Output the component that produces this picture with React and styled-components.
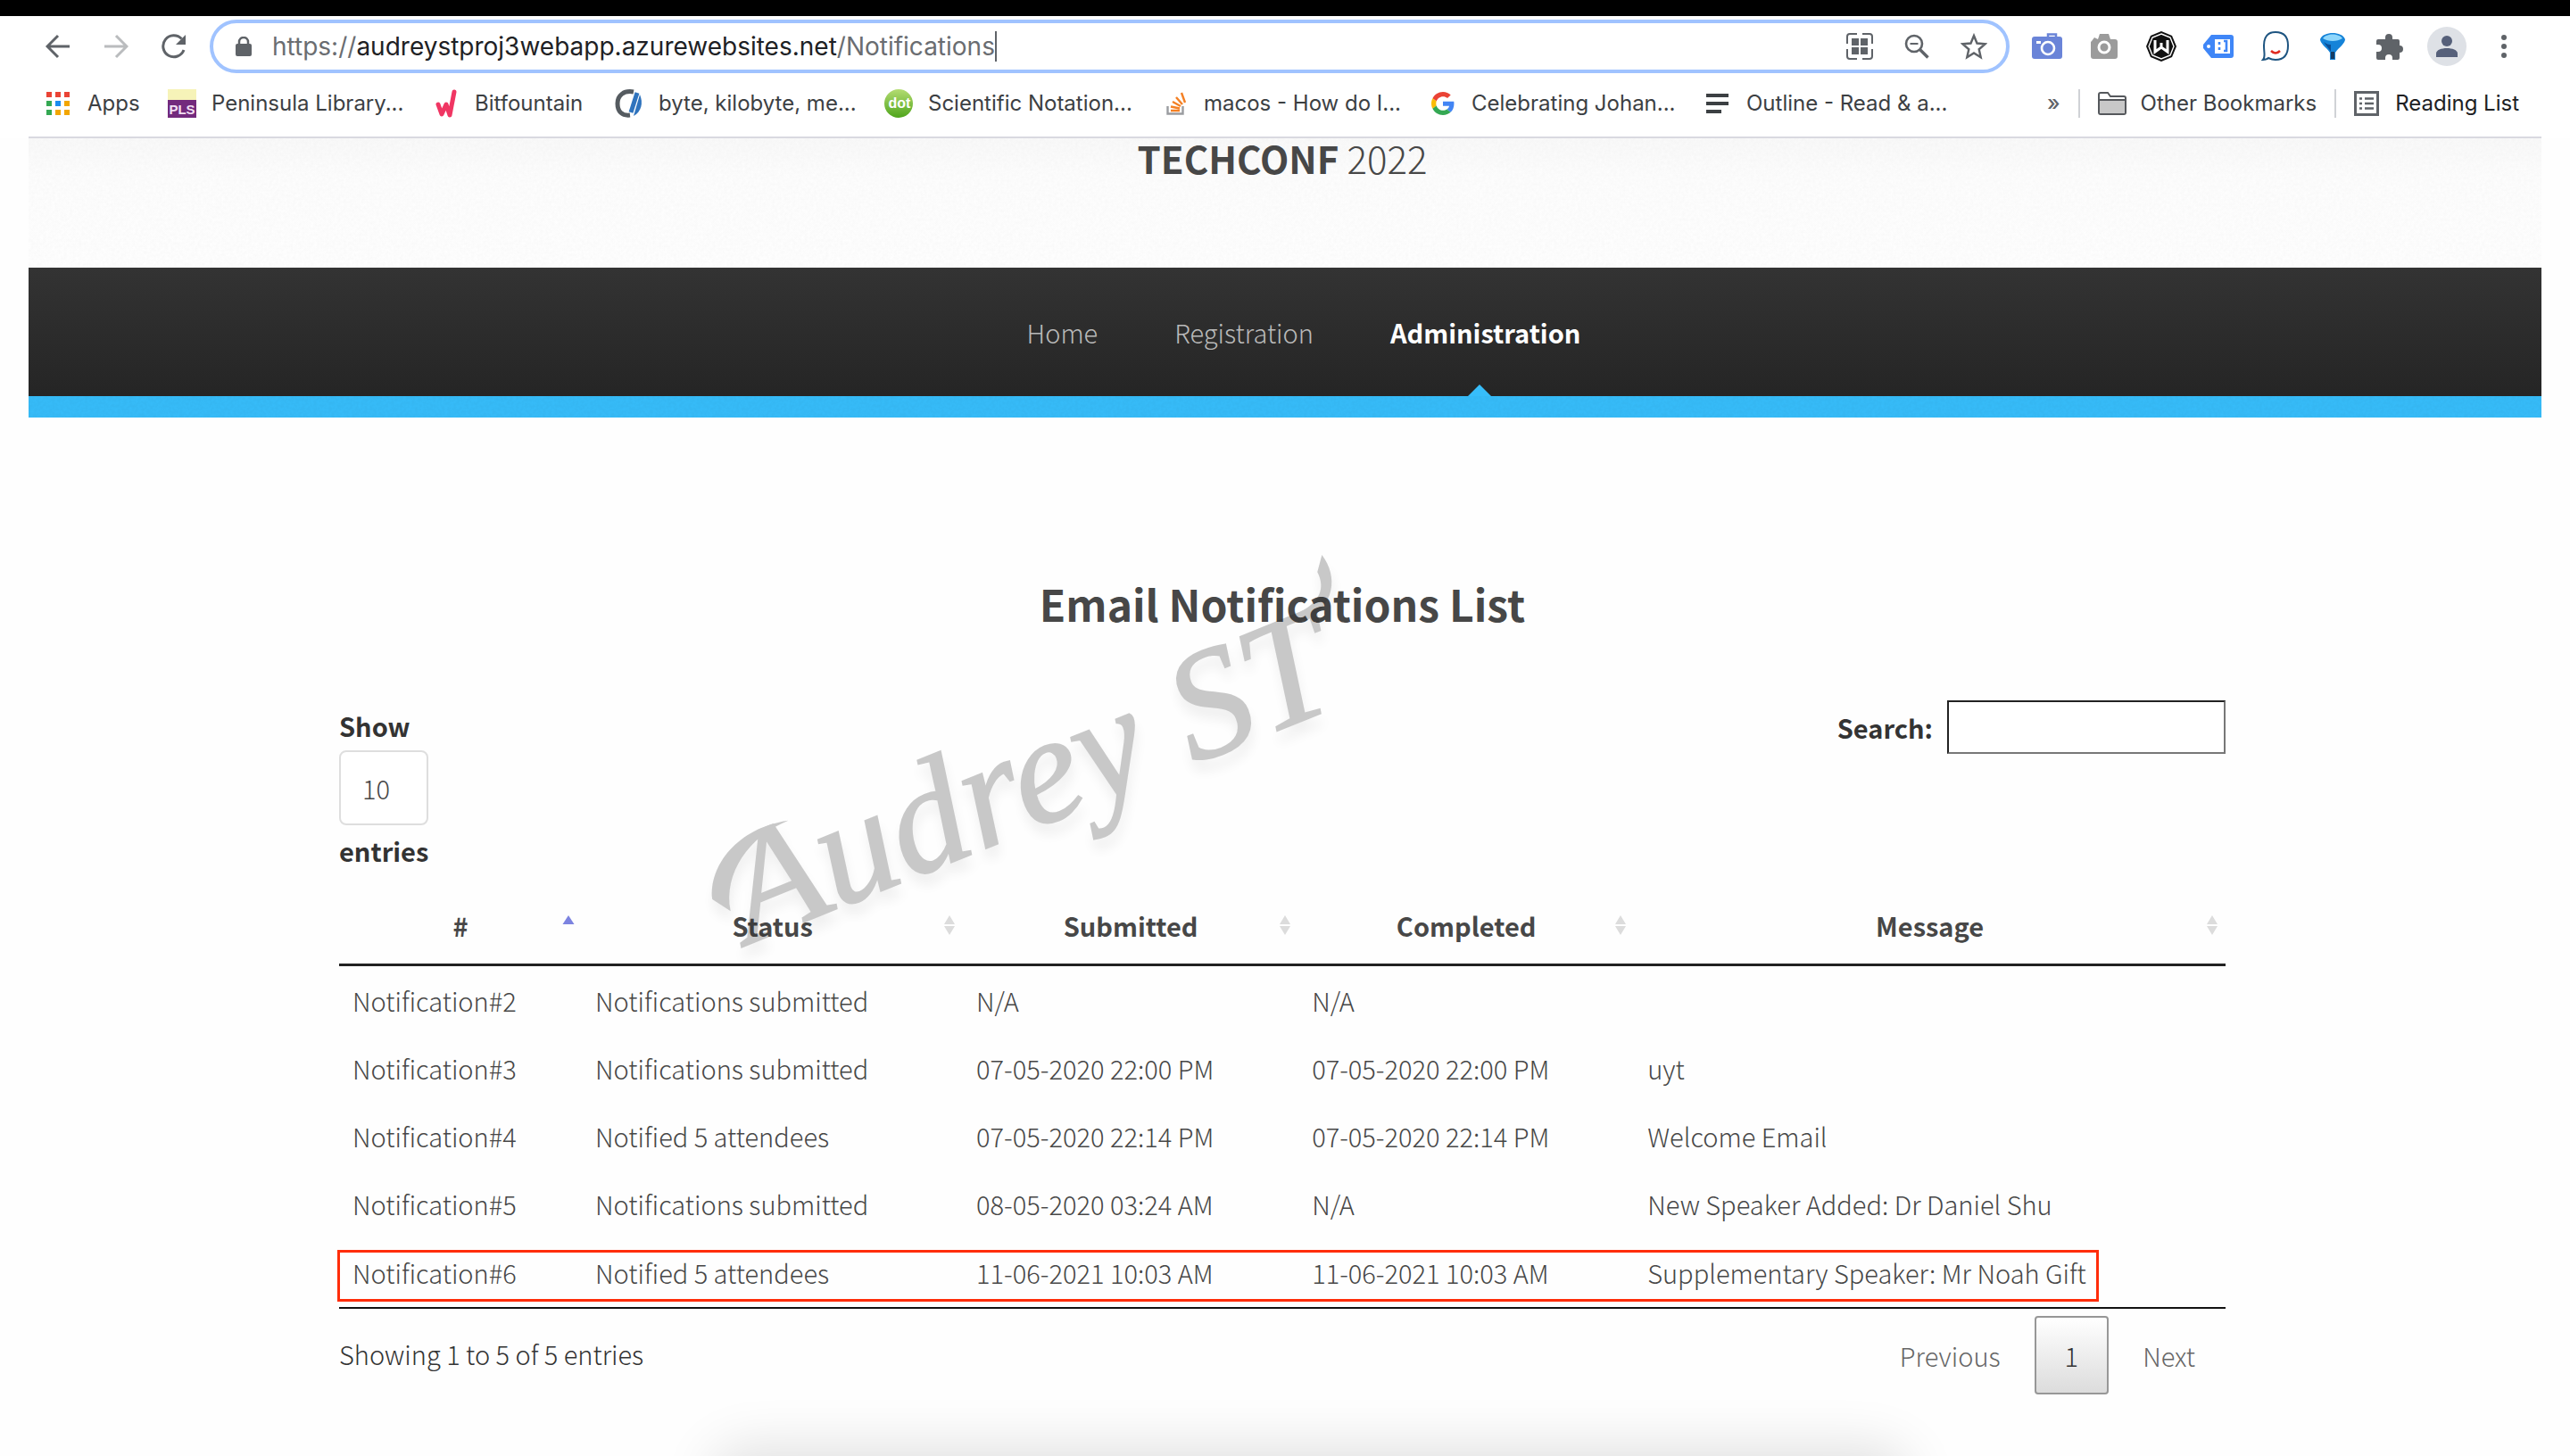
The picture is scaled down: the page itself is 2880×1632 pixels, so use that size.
import React from "react";
import styled, { createGlobalStyle, css } from "styled-components";

const GlobalStyle = createGlobalStyle`
  *, *::before, *::after { box-sizing: border-box; }
  html, body { margin: 0; background: #fff; overflow: hidden; }
  a { color: inherit; text-decoration: none; }
`;

const siteFont = `"Source Sans Pro", "Noto Sans CJK SC", "Noto Sans", sans-serif`;
const chromeFont = `Inter, "Liberation Sans", sans-serif`;

const Screen = styled.div`
  position: relative;
  min-height: 100vh;
  overflow: hidden;
  background: #fefefe;
`;

const TopEdge = styled.div`
  height: 18px;
  background: #000;
`;

/* ---------- Browser chrome ---------- */

const Chrome = styled.header`
  font-family: ${chromeFont};
  color: #3c4043;
  background: #fff;
  padding: 4px 32px 0;
`;

const Toolbar = styled.div`
  display: flex;
  align-items: center;
  height: 60px;
  padding: 0 10px 0 16px;
`;

const IconButton = styled.button`
  display: grid;
  place-items: center;
  flex: none;
  width: ${(p) => p.$w || 64}px;
  height: 52px;
  padding: 0;
  border: 0;
  background: none;
  color: #5f6368;
  svg { display: block; }
`;

const AddressBar = styled.div`
  flex: 1;
  display: flex;
  align-items: center;
  height: 60px;
  margin-left: 22px;
  margin-right: 10px;
  padding: 0 4px 0 16px;
  border: 4px solid #a0c3ff;
  border-radius: 30px;
`;

const Url = styled.div`
  flex: 1;
  display: flex;
  align-items: center;
  margin-left: 14px;
  font-size: 28px;
  line-height: 36px;
  color: #6a6d71;
  outline: none;
  white-space: nowrap;
  b { font-weight: 400; color: #202124; }
`;

const Caret = styled.i`
  width: 2px;
  height: 34px;
  background: #5f6368;
`;

const Extensions = styled.div`
  display: flex;
`;

const Avatar = styled.span`
  display: grid;
  place-items: center;
  width: 44px;
  height: 44px;
  border-radius: 50%;
  background: #dee1e6;
`;

const Bookmarks = styled.nav`
  display: flex;
  align-items: center;
  height: 73px;
  padding: 0 25px 3px 20px;
  border-bottom: 2px solid #d9d9e0;
`;

const Bookmark = styled.a`
  flex: none;
  display: flex;
  align-items: center;
  width: ${(p) => (p.$w ? `${p.$w}px` : "auto")};
  gap: ${(p) => p.$gap || 18}px;
  font-size: 24px;
  line-height: 32px;
  white-space: nowrap;
  color: ${(p) => (p.$dark ? "#202124" : "#3c4043")};
  svg { flex: none; display: block; }
`;

const Spacer = styled.div`
  flex: 1;
`;

const Divider = styled.i`
  width: 2px;
  height: 32px;
  margin: 0 20px;
  background: #d0d2d6;
`;

const More = styled.button`
  padding: 0;
  border: 0;
  background: none;
  font: 500 24px/32px ${chromeFont};
  color: #5f6368;
`;

/* ---------- Conference site ---------- */

const Site = styled.div`
  margin: 0 32px;
  font-family: ${siteFont};
  font-weight: 300;
  font-size: 29px;
  line-height: 48px;
  color: #474747;
`;

const Banner = styled.div`
  position: relative;
  padding: 0 6px 101px 0;
  background: linear-gradient(#fafafa, #fefefe 30%, #fff);
  text-align: center;
`;

const Grain = styled.svg`
  position: absolute;
  inset: 0;
  width: 100%;
  height: 100%;
  opacity: ${(p) => p.$strength};
`;

const Brand = styled.h1`
  position: relative;
  margin: 0;
  font-size: 42px;
  line-height: 44px;
  font-weight: 300;
  color: #474747;
  b { font-weight: 700; }
`;

const SiteNav = styled.nav`
  position: relative;
  display: flex;
  justify-content: center;
  gap: 86px;
  padding: 48px 0 48px 42px;
  background: linear-gradient(#333, #252525);
`;

const NavLink = styled.a`
  position: relative;
  color: #b9b9b9;
  ${(p) =>
    p.$active &&
    css`
      font-weight: 700;
      color: #fff;
      &::after {
        content: "";
        position: absolute;
        left: 50%;
        bottom: -48px;
        margin-left: -20px;
        border: 13px solid transparent;
        border-top: 0;
        border-bottom: 13px solid #37bdfa;
      }
    `}
`;

const Stripe = styled.div`
  position: relative;
  height: 24px;
  background: #37bdfa;
`;

const Content = styled.main`
  width: 75.23%;
  margin: 0 auto;
  padding-top: 178px;
`;

const ContentShift = styled.div`
  padding-right: 6px;
`;

const Title = styled.h2`
  margin: 0 0 79px;
  font-size: 48px;
  line-height: 60px;
  font-weight: 700;
  text-align: center;
`;

const Controls = styled.div`
  display: flex;
  justify-content: space-between;
  align-items: flex-start;
`;

const LengthLabel = styled.label`
  display: flex;
  flex-direction: column;
  align-items: flex-start;
  gap: 4px;
  padding-top: 4px;
  font-weight: 700;
  color: #333;
`;

const LengthSelect = styled.select`
  appearance: none;
  width: 100px;
  height: 84px;
  padding: 0 24px;
  border: 2px solid #dedede;
  border-radius: 8px;
  background: #fff;
  font: 300 29px/48px ${siteFont};
  color: #474747;
`;

const SearchLabel = styled.label`
  display: flex;
  align-items: center;
  gap: 16px;
  font-weight: 700;
  color: #333;
`;

const SearchInput = styled.input`
  width: 312px;
  height: 60px;
  padding: 2px;
  border: 2px solid;
  border-color: #222 #777 #777 #222;
  border-radius: 0;
  background: #fff;
  font: 300 29px/48px ${siteFont};
`;

const TableWrap = styled.div`
  position: relative;
  margin-top: 17px;
`;

const Table = styled.table`
  width: 100%;
  table-layout: fixed;
  border-collapse: separate;
  border-spacing: 0;
  border-bottom: 2px solid #111;
`;

const Th = styled.th`
  position: relative;
  height: 89px;
  padding: 0 36px;
  border-bottom: 3px solid #222;
  font-weight: 700;
  text-align: center;
  svg {
    position: absolute;
    right: 8px;
    top: 31px;
  }
`;

const Td = styled.td`
  height: 76px;
  padding: 0 15px;
  white-space: nowrap;
  tr:last-child > & { height: 78px; }
`;

const Highlight = styled.div`
  position: absolute;
  left: -2px;
  bottom: 8px;
  width: 93.4%;
  height: 58px;
  border: 3px solid #ff2d0a;
  pointer-events: none;
`;

const Footer = styled.div`
  display: flex;
  justify-content: space-between;
  align-items: flex-start;
  margin-top: 8px;
`;

const Info = styled.p`
  margin: 0;
  line-height: 84px;
  color: #333;
`;

const Pager = styled.div`
  display: flex;
  gap: 4px;
`;

const PageButton = styled.button`
  height: 88px;
  padding: 0 32px;
  border: 2px solid transparent;
  border-radius: 4px;
  background: none;
  font: 300 29px/48px ${siteFont};
  color: #666;
  ${(p) =>
    p.$current &&
    css`
      border-color: #979797;
      background: linear-gradient(#fff, #dcdcdc);
      color: #333;
    `}
`;

const Watermark = styled.svg`
  position: absolute;
  left: 780px;
  top: 600px;
  pointer-events: none;
`;

const DockShadow = styled.div`
  position: absolute;
  left: 28%;
  right: 26%;
  top: 100%;
  height: 60px;
  border-radius: 30px;
  box-shadow: 0 0 60px 10px rgba(0, 0, 0, 0.12);
`;

/* ---------- Icons ---------- */

const ArrowIcon = ({ forward }) => (
  <svg width="28" height="28" viewBox="0 0 28 28" fill="none" stroke={forward ? "#babcbe" : "#5f6368"} strokeWidth="3">
    <path d={forward ? "M1 14h24M14 2l12 12-12 12" : "M27 14H3M14 2 2 14l12 12"} />
  </svg>
);

const ReloadIcon = () => (
  <svg width="28" height="28" viewBox="0 0 28 28" fill="none">
    <path d="M25 18A12 12 0 1 1 22.500 5.500" stroke="#5f6368" strokeWidth="3" />
    <path d="M27 1v11H16z" fill="#5f6368" />
  </svg>
);

const LockIcon = () => (
  <svg width="18" height="22" viewBox="0 0 18 22">
    <rect y="8" width="18" height="14" rx="2" fill="#5f6368" />
    <path d="M4 9V6a5 5 0 0 1 10 0v3" fill="none" stroke="#5f6368" strokeWidth="2.500" />
  </svg>
);

const QrIcon = () => (
  <svg width="30" height="30" viewBox="0 0 30 30" fill="none">
    <path d="M1 12V4a3 3 0 0 1 3-3h8M18 1h8a3 3 0 0 1 3 3v8M29 18v8a3 3 0 0 1-3 3h-8M12 29H4a3 3 0 0 1-3-3v-8" stroke="#5f6368" strokeWidth="2" />
    <path d="M6 6h8v8H6zM16 6h8v8h-8zM6 16h8v8H6zM16 16h8v8h-8z" fill="#5f6368" />
  </svg>
);

const ZoomOutIcon = () => (
  <svg width="28" height="28" viewBox="0 0 28 28" fill="none" stroke="#5f6368">
    <circle cx="11" cy="11" r="9" strokeWidth="2.600" />
    <path d="M6.500 11h9" strokeWidth="2" />
    <path d="m17.500 17.500 9 9" strokeWidth="3.400" />
  </svg>
);

const StarIcon = () => (
  <svg width="30" height="30" viewBox="0 0 30 30">
    <path d="m15 3 3.500 8.500 9 .8-6.800 6 2 9L15 22.500 7.300 27.300l2-9-6.800-6 9-.8z" fill="none" stroke="#5f6368" strokeWidth="2.400" />
  </svg>
);

const CameraBlueIcon = () => (
  <svg width="34" height="30" viewBox="0 0 34 30">
    <path d="M18 5V1.500h9V5" fill="none" stroke="#6a84d8" strokeWidth="2.500" />
    <rect y="4" width="34" height="25" rx="3" fill="#6a84d8" />
    <rect x="5" y="9" width="5" height="3" fill="#fff" />
    <circle cx="18" cy="17" r="7" fill="none" stroke="#fff" strokeWidth="2.600" />
  </svg>
);

const CameraGreyIcon = () => (
  <svg width="30" height="28" viewBox="0 0 30 28">
    <path d="M1 8 4 4l4 2 2-6h10l2 6h5a3 3 0 0 1 3 3v16a3 3 0 0 1-3 3H3a3 3 0 0 1-3-3V9z" fill="#9b9b9b" />
    <circle cx="15" cy="15" r="6" fill="none" stroke="#fff" strokeWidth="3" />
  </svg>
);

const ShieldWIcon = () => (
  <svg width="34" height="34" viewBox="0 0 34 34">
    <path d="M17 0 29 5l5 12-5 12-12 5-12-5L0 17 5 5z" fill="#111" />
    <path d="m17 3 10 4 4 10-4 10-10 4-10-4-4-10L7 7z" fill="none" stroke="#fff" strokeWidth="1.400" />
    <path d="M10 10v13l7-5 7 5V10M17 13v6" fill="none" stroke="#fff" strokeWidth="3" />
  </svg>
);

const TagIcon = () => (
  <svg width="34" height="26" viewBox="0 0 34 26">
    <path d="M9 0h22a3 3 0 0 1 3 3v20a3 3 0 0 1-3 3H9l-9-11v-4z" fill="#3f86f7" />
    <circle cx="6" cy="13" r="2" fill="#fff" />
    <path d="M13 5h17v16H13z" fill="#fff" />
    <path d="M18 8v3M18 14v3M23 7h3v11h-3" fill="none" stroke="#3f86f7" strokeWidth="2.600" />
  </svg>
);

const ChatIcon = () => (
  <svg width="32" height="34" viewBox="0 0 32 34" fill="none">
    <path d="M2 32c3-3 1-7 1-16C3 5 8 1 16 1s14 4 14 15-5 16-14 16c-4 0-6-1-8-2-2 2-4 2-6 2z" stroke="#1d5480" strokeWidth="2" />
    <path d="M11 22q5 5 10 0" stroke="#e02b20" strokeWidth="2.500" />
  </svg>
);

const BalloonIcon = () => (
  <svg width="30" height="30" viewBox="0 0 30 30">
    <path d="M1 7c2-5 8-7 14-7s12 2 14 7c0 5-7 9-11 15v8h-6v-8C8 16 1 12 1 7z" fill="#1583d8" />
    <path d="M4 6c4-6 18-6 22 0-6 4-16 4-22 0z" fill="#8ed6fb" />
    <path d="M5 10c4 3 6 3 8 3v8C11 17 7 14 5 10z" fill="#0b4f96" />
    <path d="M13 21h4v8h-4z" fill="#163c63" />
  </svg>
);

const PuzzleIcon = () => (
  <svg width="30" height="30" viewBox="0 0 30 30">
    <path d="M2 7h8V5a4 4 0 0 1 8 0v2h6a2 2 0 0 1 2 2v5a4 4 0 0 1 0 8v6a2 2 0 0 1-2 2h-6v-2a4 4 0 0 0-8 0v2H2a2 2 0 0 1-2-2v-7h2a4 4 0 0 0 0-8H0V9a2 2 0 0 1 2-2z" fill="#5f6368" />
  </svg>
);

const PersonIcon = () => (
  <svg width="26" height="26" viewBox="0 0 26 26" fill="#56607a">
    <circle cx="13" cy="7" r="6" />
    <path d="M1 25v-4c0-4 6-6 12-6s12 2 12 6v4z" />
  </svg>
);

const DotsIcon = () => (
  <svg width="8" height="28" viewBox="0 0 8 28" fill="#5f6368">
    <circle cx="4" cy="4" r="3" />
    <circle cx="4" cy="14" r="3" />
    <circle cx="4" cy="24" r="3" />
  </svg>
);

const appColors = ["#ea4335", "#ea4335", "#ea4335", "#34a853", "#1a8cf0", "#f2a600", "#34a853", "#f2a600", "#f2a600"];
const AppsIcon = () => (
  <svg width="26" height="26" viewBox="0 0 26 26">
    {appColors.map((c, i) => (
      <rect key={i} x={(i % 3) * 10} y={Math.floor(i / 3) * 10} width="6" height="6" fill={c} />
    ))}
  </svg>
);

const PlsIcon = () => (
  <svg width="32" height="32" viewBox="0 0 32 32">
    <rect width="32" height="12" fill="#f6f3b8" />
    <rect y="12" width="32" height="20" fill="#732a7d" />
    <text x="16" y="28" fill="#f1dff3" fontFamily="Liberation Sans, sans-serif" fontWeight="700" fontSize="15" textAnchor="middle">PLS</text>
  </svg>
);

const BitIcon = () => (
  <svg width="24" height="32" viewBox="0 0 24 32" fill="none" stroke="#f03663" strokeWidth="5" strokeLinecap="round" strokeLinejoin="round">
    <path d="m3 17 4 11 5-11 4 12 5-26" />
  </svg>
);

const ByteIcon = () => (
  <svg width="32" height="32" viewBox="0 0 32 32" fill="none">
    <path d="M21 3C10 1 3 7 3 16s5 14 14 13" stroke="#555b60" strokeWidth="5" />
    <path d="m25 4-7 22" stroke="#2f73bd" strokeWidth="5" />
    <path d="M28 6c4 9 2 19-7 24z" fill="#2f73bd" />
  </svg>
);

const DotIcon = () => (
  <svg width="32" height="32" viewBox="0 0 32 32">
    <defs>
      <linearGradient id="dotFill" x1="0" y1="0" x2="0" y2="1">
        <stop offset="0" stopColor="#b4dc72" />
        <stop offset="1" stopColor="#4fa51c" />
      </linearGradient>
    </defs>
    <circle cx="16" cy="16" r="16" fill="url(#dotFill)" />
    <text x="17" y="21" fill="#fff" fontFamily="Liberation Sans, sans-serif" fontWeight="700" fontSize="16" textAnchor="middle">dot</text>
  </svg>
);

const StackIcon = () => (
  <svg width="24" height="26" viewBox="0 0 24 26" fill="none">
    <path d="M1.500 16v8.500h17V16" stroke="#9a9ca0" strokeWidth="2.400" />
    <path d="M5 21h10M5 16.500l10 2M7 11l9 5M11 6l7 8M17 1l4 11" stroke="#f48024" strokeWidth="2.400" />
  </svg>
);

const GoogleIcon = () => (
  <svg width="26" height="26" viewBox="0 0 48 48">
    <path fill="#EA4335" d="M24 9.500c3.540 0 6.710 1.220 9.210 3.600l6.850-6.850C35.900 2.380 30.470 0 24 0 14.620 0 6.510 5.380 2.560 13.220l7.980 6.190C12.430 13.720 17.740 9.500 24 9.500z" />
    <path fill="#4285F4" d="M46.980 24.550c0-1.570-.15-3.090-.38-4.550H24v9.020h12.940c-.58 2.960-2.260 5.480-4.780 7.180l7.730 6c4.510-4.180 7.090-10.360 7.090-17.650z" />
    <path fill="#FBBC05" d="M10.530 28.590c-.48-1.450-.76-2.990-.76-4.590s.27-3.140.76-4.590l-7.980-6.190C.92 16.460 0 20.120 0 24c0 3.880.92 7.540 2.560 10.780l7.970-6.190z" />
    <path fill="#34A853" d="M24 48c6.480 0 11.930-2.130 15.890-5.810l-7.730-6c-2.150 1.450-4.920 2.300-8.160 2.300-6.260 0-11.570-4.220-13.470-9.910l-7.980 6.190C6.510 42.620 14.620 48 24 48z" />
  </svg>
);

const OutlineIcon = () => (
  <svg width="26" height="22" viewBox="0 0 26 22" stroke="#3c4043" strokeWidth="4">
    <path d="M0 2h25M0 11h25M0 20h17" />
  </svg>
);

const FolderIcon = () => (
  <svg width="32" height="26" viewBox="0 0 32 26">
    <path d="M1 23V3a2 2 0 0 1 2-2h8l3 4h15a2 2 0 0 1 2 2v16a2 2 0 0 1-2 2H3a2 2 0 0 1-2-2z" fill="#fff" stroke="#55585c" strokeWidth="2" />
    <path d="M2 9h28v15H2z" fill="#c8c8c8" />
    <path d="M1 9h30" stroke="#55585c" strokeWidth="2" />
  </svg>
);

const ListIcon = () => (
  <svg width="28" height="28" viewBox="0 0 28 28" fill="none" stroke="#5f6368">
    <rect x="1.500" y="1.500" width="25" height="25" strokeWidth="3" />
    <path d="M6 8.500h3M6 14h3M6 19.500h3M12 8.500h10M12 14h10M12 19.500h10" strokeWidth="2.400" />
  </svg>
);

const SortIcon = ({ active }) => (
  <svg width="14" height="24" viewBox="0 0 14 24">
    {active ? (
      <path d="M7 1l6.500 10H.5z" fill="#7c83e0" />
    ) : (
      <path d="M7 1l6 10H1zM7 23l6-10H1z" fill="#dcdcdc" />
    )}
  </svg>
);

const GrainTexture = ({ strength, id }) => (
  <Grain $strength={strength} aria-hidden="true">
    <filter id={id}>
      <feTurbulence type="fractalNoise" baseFrequency="0.3" numOctaves="2" />
      <feColorMatrix values="0 0 0 0 0  0 0 0 0 0  0 0 0 0 0  1 0 0 0 0" />
    </filter>
    <rect width="100%" height="100%" filter={`url(#${id})`} />
  </Grain>
);

/* ---------- Data ---------- */

const bookmarks = [
  { label: "Apps", icon: <AppsIcon />, w: 136, gap: 20 },
  { label: "Peninsula Library...", icon: <PlsIcon />, w: 300, gap: 17 },
  { label: "Bitfountain", icon: <BitIcon />, w: 201, gap: 20 },
  { label: "byte, kilobyte, me...", icon: <ByteIcon />, w: 302, gap: 17 },
  { label: "Scientific Notation...", icon: <DotIcon />, w: 316, gap: 17 },
  { label: "macos - How do I...", icon: <StackIcon />, w: 297, gap: 18 },
  { label: "Celebrating Johan...", icon: <GoogleIcon />, w: 308, gap: 19 },
  { label: "Outline - Read & a...", icon: <OutlineIcon />, gap: 19 },
];

const extensions = [
  ["Screenshot", <CameraBlueIcon />],
  ["Capture", <CameraGreyIcon />],
  ["Shield", <ShieldWIcon />],
  ["Tag", <TagIcon />],
  ["Chat", <ChatIcon />],
  ["Balloon", <BalloonIcon />],
  ["Extensions", <PuzzleIcon />],
  ["Profile", <Avatar><PersonIcon /></Avatar>],
  ["Menu", <DotsIcon />],
];

const columns = [
  ["#", "12.87%"],
  ["Status", "20.2%"],
  ["Submitted", "17.79%"],
  ["Completed", "17.79%"],
  ["Message", "31.35%"],
];

const rows = [
  ["Notification#2", "Notifications submitted", "N/A", "N/A", ""],
  ["Notification#3", "Notifications submitted", "07-05-2020 22:00 PM", "07-05-2020 22:00 PM", "uyt"],
  ["Notification#4", "Notified 5 attendees", "07-05-2020 22:14 PM", "07-05-2020 22:14 PM", "Welcome Email"],
  ["Notification#5", "Notifications submitted", "08-05-2020 03:24 AM", "N/A", "New Speaker Added: Dr Daniel Shu"],
  ["Notification#6", "Notified 5 attendees", "11-06-2021 10:03 AM", "11-06-2021 10:03 AM", "Supplementary Speaker: Mr Noah Gift"],
];

export default function App() {
  return (
    <Screen>
      <GlobalStyle />
      <TopEdge />
      <Chrome>
        <Toolbar>
          <IconButton $w={34} aria-label="Back"><ArrowIcon /></IconButton>
          <IconButton $w={95} aria-label="Forward"><ArrowIcon forward /></IconButton>
          <IconButton $w={36} aria-label="Reload"><ReloadIcon /></IconButton>
          <AddressBar>
            <IconButton $w={36} aria-label="Site information"><LockIcon /></IconButton>
            <Url role="textbox" aria-label="Address" tabIndex={0}>
              https://<b>audreystproj3webapp.azurewebsites.net</b>/Notifications
              <Caret />
            </Url>
            <IconButton aria-label="QR code"><QrIcon /></IconButton>
            <IconButton aria-label="Zoom"><ZoomOutIcon /></IconButton>
            <IconButton aria-label="Bookmark this page"><StarIcon /></IconButton>
          </AddressBar>
          <Extensions>
            {extensions.map(([label, icon]) => (
              <IconButton key={label} aria-label={label}>{icon}</IconButton>
            ))}
          </Extensions>
        </Toolbar>
        <Bookmarks aria-label="Bookmarks">
          {bookmarks.map((b) => (
            <Bookmark key={b.label} href="#" $w={b.w} $gap={b.gap}>
              {b.icon}
              {b.label}
            </Bookmark>
          ))}
          <Spacer />
          <More aria-label="More bookmarks">»</More>
          <Divider />
          <Bookmark href="#" $gap={16}><FolderIcon />Other Bookmarks</Bookmark>
          <Divider />
          <Bookmark href="#" $gap={18} $dark><ListIcon />Reading List</Bookmark>
        </Bookmarks>
      </Chrome>

      <Site>
        <Banner>
          <GrainTexture id="grainLight" strength={0.025} />
          <Brand><b>TECHCONF</b> 2022</Brand>
        </Banner>
        <SiteNav aria-label="Main">
          <NavLink href="#">Home</NavLink>
          <NavLink href="#">Registration</NavLink>
          <NavLink href="#" $active>Administration</NavLink>
        </SiteNav>
        <Stripe><GrainTexture id="grainBlue" strength={0.04} /></Stripe>

        <ContentShift>
          <Content>
            <Title>Email Notifications List</Title>
            <Controls>
              <LengthLabel>
                Show
                <LengthSelect defaultValue="10">
                  <option>10</option>
                  <option>25</option>
                  <option>50</option>
                </LengthSelect>
                entries
              </LengthLabel>
              <SearchLabel>
                Search:
                <SearchInput type="search" />
              </SearchLabel>
            </Controls>
            <TableWrap>
              <Table>
                <colgroup>
                  {columns.map(([name, width]) => <col key={name} width={width} />)}
                </colgroup>
                <thead>
                  <tr>
                    {columns.map(([name], i) => (
                      <Th key={name} scope="col">
                        {name}
                        <SortIcon active={i === 0} />
                      </Th>
                    ))}
                  </tr>
                </thead>
                <tbody>
                  {rows.map((r) => (
                    <tr key={r[0]}>
                      {r.map((cell, i) => <Td key={i}>{cell}</Td>)}
                    </tr>
                  ))}
                </tbody>
              </Table>
              <Highlight />
            </TableWrap>
            <Footer>
              <Info>Showing 1 to 5 of 5 entries</Info>
              <Pager>
                <PageButton>Previous</PageButton>
                <PageButton $current>1</PageButton>
                <PageButton>Next</PageButton>
              </Pager>
            </Footer>
          </Content>
        </ContentShift>
      </Site>

      <Watermark width="800" height="500" viewBox="0 0 800 500">
        <defs>
          <filter id="markShadow" x="-10%" y="-10%" width="120%" height="130%">
            <feDropShadow dx="2" dy="12" stdDeviation="7" floodColor="#000" floodOpacity="0.25" />
          </filter>
        </defs>
        <g opacity="0.24" filter="url(#markShadow)">
          <g transform="translate(60 458) rotate(-22)" fill="#222">
            <text fontFamily="Liberation Serif, serif" fontStyle="italic" fontSize="173" stroke="#222" strokeWidth="2">Audrey ST</text>
            <path d="M92 -112C44 -112 2 -84 -6 -42l-14 -20C-10 -98 36 -126 92 -112z" />
            <path d="M712 -114c24 -2 36 -14 34 -34l12 -16c8 30 -8 58 -46 62z" />
          </g>
        </g>
      </Watermark>
      <DockShadow />
    </Screen>
  );
}
